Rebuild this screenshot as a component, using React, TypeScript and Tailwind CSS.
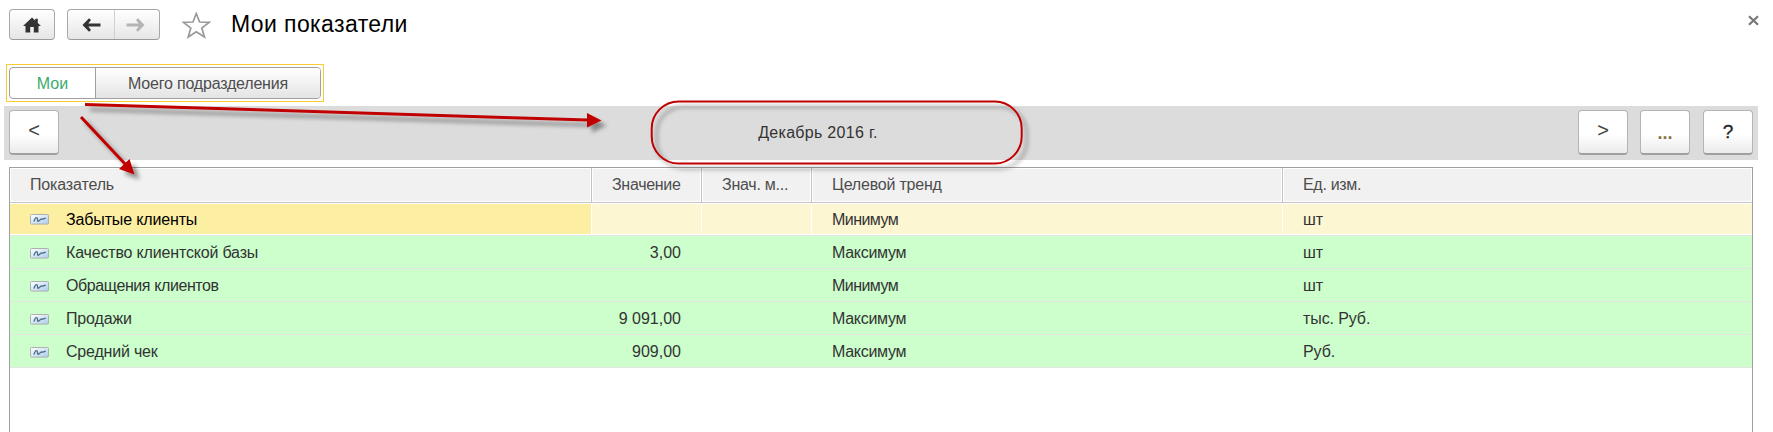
import React from 'react';

const rows = [
  { name: 'Забытые клиенты', value: '', trend: 'Минимум', unit: 'шт', selected: true, nameTrack: 'tracking-[-0.15px]', trendTrack: 'tracking-[-0.55px]' },
  { name: 'Качество клиентской базы', value: '3,00', trend: 'Максимум', unit: 'шт', nameTrack: 'tracking-[-0.17px]', trendTrack: 'tracking-[-0.3px]' },
  { name: 'Обращения клиентов', value: '', trend: 'Минимум', unit: 'шт', nameTrack: 'tracking-[-0.4px]', trendTrack: 'tracking-[-0.55px]' },
  { name: 'Продажи', value: '9 091,00', trend: 'Максимум', unit: 'тыс. Руб.', nameTrack: 'tracking-[-0.15px]', trendTrack: 'tracking-[-0.3px]' },
  { name: 'Средний чек', value: '909,00', trend: 'Максимум', unit: 'Руб.', nameTrack: 'tracking-[-0.2px]', trendTrack: 'tracking-[-0.3px]' },
];

const columns = [
  { title: 'Показатель', track: 'tracking-[-0.15px]' },
  { title: 'Значение', track: 'tracking-[-0.3px]' },
  { title: 'Знач. м...', track: 'tracking-[-0.25px]' },
  { title: 'Целевой тренд', track: 'tracking-[-0.2px]' },
  { title: 'Ед. изм.', track: 'tracking-[-0.3px]' },
];

const GRID = 'grid grid-cols-[582px_110px_110px_471px_1fr]';

function MetricIcon() {
  return (
    <svg width="19" height="11" viewBox="0 0 19 11" className="shrink-0">
      <defs>
        <linearGradient id="metric" x1="0" y1="0" x2="1" y2="1">
          <stop offset="0" stopColor="#ffffff" />
          <stop offset="0.5" stopColor="#d6e6f5" />
          <stop offset="1" stopColor="#a8cbea" />
        </linearGradient>
      </defs>
      <rect x="0.5" y="0.5" width="18" height="9.6" rx="0.8" fill="url(#metric)" stroke="#aeb2ad" />
      <path d="M4 7.6 Q5 3.6 6.6 3.6 Q7.6 3.6 7.6 6.8 Q8.2 7.8 9.4 6.6 Q11 4.6 12.4 5.2 L15.8 4.2" fill="none" stroke="#4f718f" strokeWidth="1.4" />
    </svg>
  );
}

function BarButton({ children, className = '' }: { children: React.ReactNode; className?: string }) {
  return (
    <button
      className={`flex h-[45px] w-[50px] items-center justify-center rounded-[4px] border border-b-2 border-[#b4b4b4] border-b-[#a0a0a0] bg-linear-to-b from-white from-55% to-[#ebebeb] ${className}`}
    >
      {children}
    </button>
  );
}

function Annotations() {
  return (
    <svg className="pointer-events-none absolute left-0 top-0" width="1773" height="432">
      <defs>
        <filter id="shade" filterUnits="userSpaceOnUse" x="0" y="0" width="1773" height="432">
          <feDropShadow dx="5" dy="5" stdDeviation="2" floodColor="#000" floodOpacity="0.4" />
        </filter>
      </defs>
      <g filter="url(#shade)" fill="#c00000" stroke="#c00000">
        <path d="M85 104.5 L588 120" strokeWidth="3" />
        <path d="M587 113 L601.5 120.5 L587 127.5 Z" stroke="none" />
        <path d="M81 117 L126 165" strokeWidth="3" />
        <path d="M129.5 159 L134.5 174.5 L119 169 Z" stroke="none" />
        <rect x="651.7" y="101.5" width="370" height="62" rx="27" fill="none" strokeWidth="2" />
      </g>
    </svg>
  );
}

export default function App() {
  return (
    <div className="relative h-[432px] w-[1773px] overflow-hidden bg-white font-['Liberation_Sans',Arial,sans-serif] text-[16px] text-[#333]">
      <header className="flex h-[64px] items-start pl-[9px] pt-[9px]">
        <button className="flex h-[31px] w-[46px] items-center justify-center rounded-[4px] border border-[#a8a8a8] border-b-[#9a9a9a] bg-linear-to-b from-white to-[#e6e6e6]">
          <svg width="20" height="16" viewBox="0 0 20 16" fill="#333">
            <path d="M10 0.5 L1 9 H3.5 V15.4 H8.2 V10 H11.8 V15.4 H16.5 V9 H19 L15.8 6 V1.8 H13.2 V3.5 Z" />
          </svg>
        </button>
        <div className="ml-[12px] flex h-[31px] w-[93px] rounded-[4px] border border-[#a8a8a8] border-b-[#9a9a9a] bg-linear-to-b from-white to-[#e6e6e6]">
          <button className="flex w-[47px] items-center justify-center border-r border-[#d0d0d0]">
            <svg width="19" height="14" viewBox="0 0 19 14" fill="#333">
              <path d="M0.5 7 L7 0.3 L9 2 L6.3 5.4 H18.5 V8.6 H6.3 L9 12 L7 13.7 Z" />
            </svg>
          </button>
          <button className="flex flex-1 items-center justify-center pr-[4px]">
            <svg width="19" height="14" viewBox="0 0 19 14" fill="#b4b4b4">
              <path d="M18.5 7 L12 0.3 L10 2 L12.7 5.6 H0.5 V8.4 H12.7 L10 12 L12 13.7 Z" />
            </svg>
          </button>
        </div>
        <svg className="ml-[22px] mt-[3px]" width="29" height="27" viewBox="0 0 29 27" fill="none" stroke="#999" strokeWidth="1.7">
          <path d="M14.3 1.5 L17.6 10 L27.2 10.3 L19.8 16 L22.5 25 L14.3 19.8 L6.2 25 L8.8 16 L1.4 10.3 L11 10 Z" />
        </svg>
        <h1 className="ml-[20px] mt-[2px] whitespace-nowrap text-[23px] leading-[27px] tracking-[0.4px] text-black">Мои показатели</h1>
        <button className="ml-auto mr-[14px] mt-[6px]">
          <svg width="11" height="11" viewBox="0 0 11 11" fill="none" stroke="#777" strokeWidth="2.2">
            <path d="M1 1.2 L10 9.8 M10 1.2 L1 9.8" />
          </svg>
        </button>
      </header>

      <div className="ml-[6px] h-[38px] w-[318px] border border-[#f8cd32] p-[2px]">
        <div className="flex h-[32px] w-[312px] overflow-hidden rounded-[4px] border border-[#a0a0a0] bg-white">
          <button className="w-[86px] border-r border-[#a0a0a0] pt-[2px] text-[#3aab6c]">Мои</button>
          <button className="flex-1 bg-linear-to-b from-white to-[#e4e4e4] pt-[2px] tracking-[-0.2px] text-[#4d4d4d]">Моего подразделения</button>
        </div>
      </div>

      <div className="ml-[4px] mt-[4px] flex h-[54px] w-[1754px] items-start bg-[#dcdcdc] pl-[5px] pr-[5px] pt-[4px]">
        <BarButton>
          <span className="-mt-[4px] text-[20px] text-[#444]">&lt;</span>
        </BarButton>
        <div className="flex h-[45px] flex-1 items-center justify-center pr-[1px]">
          <span className="tracking-[0.3px]">Декабрь 2016 г.</span>
        </div>
        <BarButton>
          <span className="-mt-[4px] text-[20px] text-[#444]">&gt;</span>
        </BarButton>
        <BarButton className="ml-[12px]">
          <span className="mt-[2px] text-[18px] font-bold text-[#8a7340]">...</span>
        </BarButton>
        <BarButton className="ml-[13px]">
          <span className="text-[19px] text-[#222] [-webkit-text-stroke:0.3px_#222]">?</span>
        </BarButton>
      </div>

      <div className="ml-[9px] mt-[7px] h-[280px] w-[1744px] border border-[#a0a0a0] bg-white">
        <div className={`${GRID} h-[35px] border-b border-[#c4c4c4] text-[#4d4d4d]`}>
          {columns.map((c, i) => (
            <div key={c.title} className={`p-px ${i < 4 ? 'border-r border-[#c4c4c4]' : ''}`}>
              <div className={`flex h-full items-center bg-[#f1f1f1] pb-px pl-[19px] ${c.track}`}>{c.title}</div>
            </div>
          ))}
        </div>
        <div className="pt-px">
          {rows.map((r) => (
            <div
              key={r.name}
              className={`${GRID} border-b border-[#e3e6e3] ${r.selected ? 'h-[32px] bg-white pb-px text-[#333]' : 'h-[33px] bg-[#ccffcc] pt-[2px]'}`}
            >
              <div className={`flex items-center pl-[20px] ${r.selected ? 'mr-px bg-[#fdefa2] pt-px text-black' : ''}`}>
                <MetricIcon />
                <span className={`ml-[17px] ${r.nameTrack}`}>{r.name}</span>
              </div>
              <div className={`flex items-center justify-end pr-[21px] ${r.selected ? 'mr-px bg-[#fdf6d2]' : ''}`}>{r.value}</div>
              <div className={r.selected ? 'mr-px bg-[#fdf6d2]' : ''} />
              <div className={`flex items-center pl-[20px] ${r.trendTrack} ${r.selected ? 'mr-px bg-[#fdf6d2] pt-px' : ''}`}>{r.trend}</div>
              <div className={`flex items-center pl-[20px] tracking-[-0.1px] ${r.selected ? 'bg-[#fdf6d2] pt-px' : ''}`}>{r.unit}</div>
            </div>
          ))}
        </div>
      </div>
      <Annotations />
    </div>
  );
}
